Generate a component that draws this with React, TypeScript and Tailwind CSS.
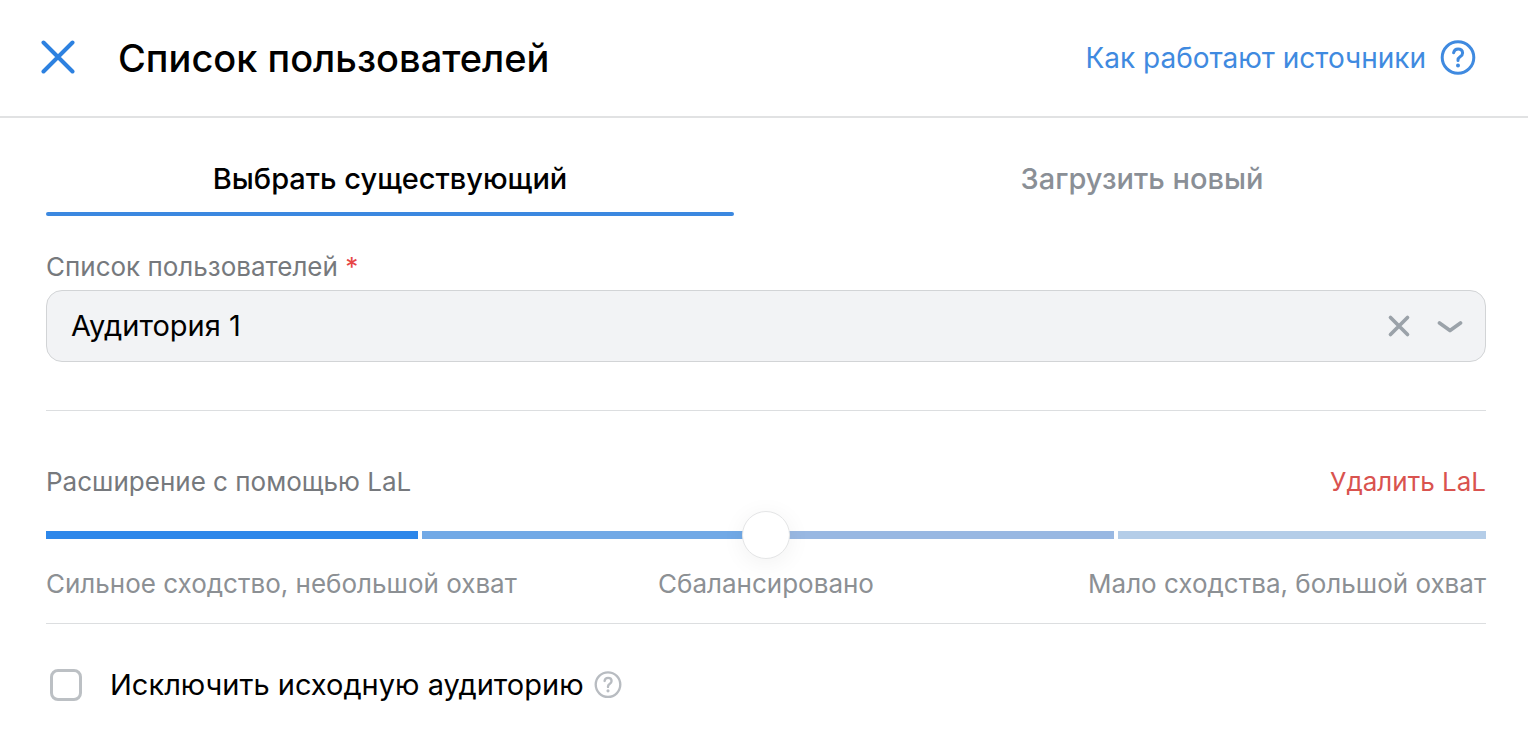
import { useState } from 'react';

function CrossIcon({ className }: { className: string }) {
  return (
    <svg viewBox="0 0 36 36" fill="none" stroke="currentColor" strokeLinecap="round" className={className} aria-hidden="true">
      <path d="M3.500 2.500 32.500 31.500M32.500 2.500 3.500 31.500" strokeWidth="4" />
    </svg>
  );
}

function HelpIcon({ className, strokeWidth }: { className: string; strokeWidth: number }) {
  return (
    <svg viewBox="0 0 36 36" fill="none" stroke="currentColor" strokeLinecap="round" strokeLinejoin="round" strokeWidth={strokeWidth} className={className} aria-hidden="true">
      <circle cx="18" cy="17.500" r="15.800" />
      <path d="M13.600 12.800c.4-2.500 2-3.900 4.500-3.900 2.600 0 4.500 1.600 4.500 4 0 1.900-1 2.900-2.500 3.900-1.500 1-2.100 1.800-2.100 3.200v.5" />
      <circle cx="18" cy="25.500" r="2" fill="currentColor" stroke="none" />
    </svg>
  );
}

const tabs = ['Выбрать существующий', 'Загрузить новый'];

export default function App() {
  const [tab, setTab] = useState(0);
  const [audience, setAudience] = useState('1');
  const [reach, setReach] = useState(50);
  const [exclude, setExclude] = useState(false);

  return (
    <div className="min-h-screen bg-white font-['Inter','Noto_Sans',sans-serif] text-black">
      <header className="flex items-center border-b-2 border-[#e1e2e3] px-10 py-8">
        <button type="button" aria-label="Закрыть" className="text-[#2d81e0]">
          <CrossIcon className="size-9" />
        </button>
        <h1 className="ml-[42px] text-[38px] leading-[52px] font-medium">Список пользователей</h1>
        <a href="#help" className="mr-3 ml-auto flex items-center gap-[14px] text-[28px] leading-9 text-[#3f8ae0]">
          Как работают источники
          <HelpIcon className="size-9" strokeWidth={3} />
        </a>
      </header>

      <main className="pr-[42px] pl-[46px]">
        <div role="tablist" className="grid grid-cols-2 gap-16 pt-7">
          {tabs.map((name, i) => (
            <button
              key={name}
              type="button"
              role="tab"
              aria-selected={tab === i}
              onClick={() => setTab(i)}
              className={
                tab === i
                  ? 'flex flex-col text-[29px] leading-[66px] font-medium text-black'
                  : 'flex flex-col text-[29px] leading-[66px] font-medium text-[#8a8f96]'
              }
            >
              <span className="w-full text-center">{name}</span>
              <span className={tab === i ? 'h-1 w-full rounded-full bg-[#3b88e0]' : 'h-1 w-full'} />
            </button>
          ))}
        </div>

        <section className="border-b border-[#dcdee0] pt-8 pb-12">
          <label htmlFor="audience" className="block pb-1 text-[26px] leading-[38px] text-[#76797d]">
            Список пользователей <span className="text-[#e64646]">*</span>
          </label>
          <div className="grid items-center rounded-2xl border border-[#d2d4d6] bg-[#f2f3f5]">
            <select
              id="audience"
              value={audience}
              onChange={(e) => setAudience(e.target.value)}
              className="col-start-1 row-start-1 h-[70px] w-full appearance-none rounded-2xl bg-transparent px-6 text-[29px] text-black"
            >
              <option value="" />
              <option value="1">Аудитория 1</option>
            </select>
            <div className="pointer-events-none col-start-1 row-start-1 flex items-center justify-end gap-[26px] pr-[22px] text-[#9ba2a9]">
              <button type="button" aria-label="Очистить" onClick={() => setAudience('')} className="pointer-events-auto">
                <svg viewBox="0 0 24 24" fill="none" stroke="currentColor" strokeWidth="3.700" strokeLinecap="round" className="size-6">
                  <path d="m3.500 3.500 17 17M20.500 3.500l-17 17" />
                </svg>
              </button>
              <svg viewBox="0 0 26 24" fill="none" stroke="currentColor" strokeWidth="3.700" strokeLinecap="round" strokeLinejoin="round" className="h-6 w-[26px]" aria-hidden="true">
                <path d="m2.500 9 10.500 7.500L23.500 9" />
              </svg>
            </div>
          </div>
        </section>

        <section className="border-b border-[#dcdee0] pt-[52px] pb-5 text-[26px] leading-[38px]">
          <div className="flex justify-between">
            <label htmlFor="reach" className="text-[#76797d]">Расширение с помощью LaL</label>
            <button type="button" className="text-[#d9534f]">Удалить LaL</button>
          </div>
          <div className="mt-[10px] grid items-center">
            <div className="col-start-1 row-start-1 grid h-2 grid-cols-[372fr_342fr_346fr_368fr] gap-1">
              <span className="bg-[#2d87ea]" />
              <span className="bg-[#71a9e6]" />
              <span className="bg-[#99b8e2]" />
              <span className="bg-[#b4cde8]" />
            </div>
            <input
              id="reach"
              type="range"
              min={0}
              max={100}
              value={reach}
              onChange={(e) => setReach(Number(e.target.value))}
              className="col-start-1 row-start-1 h-12 w-full appearance-none bg-transparent [&::-webkit-slider-thumb]:size-12 [&::-webkit-slider-thumb]:appearance-none [&::-webkit-slider-thumb]:rounded-full [&::-webkit-slider-thumb]:border [&::-webkit-slider-thumb]:border-[#e4e5e6] [&::-webkit-slider-thumb]:bg-white [&::-webkit-slider-thumb]:shadow-[0_4px_24px_rgba(0,0,0,0.06)]"
            />
          </div>
          <div className="mt-[6px] grid grid-cols-[1fr_auto_1fr] text-[#8c9094]">
            <span>Сильное сходство, небольшой охват</span>
            <span>Сбалансировано</span>
            <span className="text-right">Мало сходства, большой охват</span>
          </div>
        </section>

        <div className="flex items-center pt-10 pb-8 pl-1">
          <label className="flex items-center gap-7 text-[29px] leading-[42px]">
            <input
              type="checkbox"
              checked={exclude}
              onChange={(e) => setExclude(e.target.checked)}
              className="size-8 appearance-none rounded-lg border-3 border-[#bcc0c4] bg-white checked:border-[#2d81e0] checked:bg-[#2d81e0]"
            />
            Исключить исходную аудиторию
          </label>
          <button type="button" aria-label="Подсказка" className="ml-2.5 text-[#b8bcc1]">
            <HelpIcon className="size-7" strokeWidth={3} />
          </button>
        </div>
      </main>
    </div>
  );
}
